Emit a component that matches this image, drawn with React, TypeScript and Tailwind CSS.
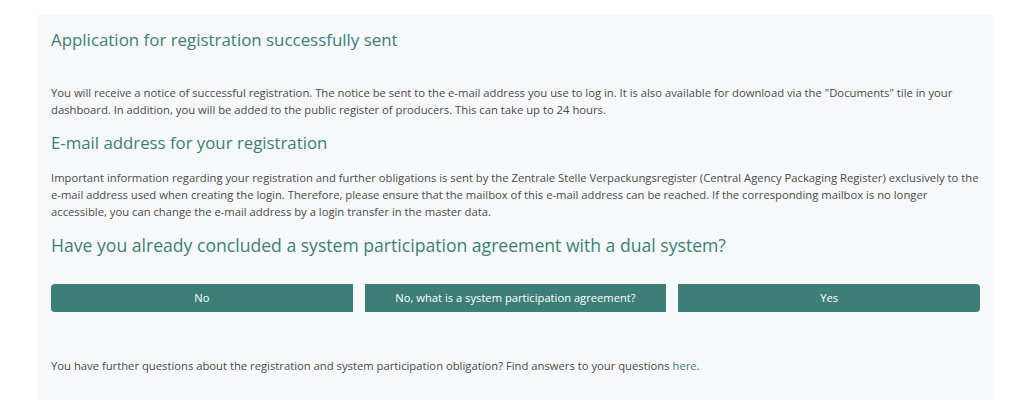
export default function App() {
  const body = "text-[11.25px] leading-[17px] text-[#4a4a4a]";
  const heading = "text-[#3d7f78] font-normal";
  return (
    <div className="min-h-[402px] w-[1024px] bg-white pt-[15px] pl-[37px]" style={{ fontFamily: '"Open Sans", "Liberation Sans", sans-serif' }}>
      <div className="w-[957px] h-[385px] bg-[#f7f8fa] px-[14px] pt-[13px]">
        <h1 className={`${heading} text-[16.9px] leading-[24px]`}>Application for registration successfully sent</h1>
        <p className={`${body} mt-[32px]`}>
          You will receive a notice of successful registration. The notice be sent to the e-mail address you use to log in. It is also available for download via the "Documents" tile in your dashboard. In addition, you will be added to the public register of producers. This can take up to 24 hours.
        </p>
        <h2 className={`${heading} text-[16.8px] leading-[24px] mt-[13px]`}>E-mail address for your registration</h2>
        <p className={`${body} mt-[14px]`}>
          Important information regarding your registration and further obligations is sent by the Zentrale Stelle Verpackungsregister (Central Agency Packaging Register) exclusively to the
          <br />
          e-mail address used when creating the login. Therefore, please ensure that the mailbox of this e-mail address can be reached. If the corresponding mailbox is no longer
          <br />
          accessible, you can change the e-mail address by a login transfer in the master data.
        </p>
        <h3 className={`${heading} text-[17.6px] leading-[26px] mt-[12px]`}>Have you already concluded a system participation agreement with a dual system?</h3>
        <div className="grid grid-cols-3 gap-3 mt-[26px]">
          <button className="h-[28px] bg-[#3d7f78] text-white text-[11.2px] rounded-l-[4px]">No</button>
          <button className="h-[28px] bg-[#3d7f78] text-white text-[11.2px]">No, what is a system participation agreement?</button>
          <button className="h-[28px] bg-[#3d7f78] text-white text-[11.2px] rounded-r-[4px]">Yes</button>
        </div>
        <p className={`${body} mt-[45px]`}>
          You have further questions about the registration and system participation obligation? Find answers to your questions <a href="#" className="text-[#3d7f78]">here</a>.
        </p>
      </div>
    </div>
  );
}
